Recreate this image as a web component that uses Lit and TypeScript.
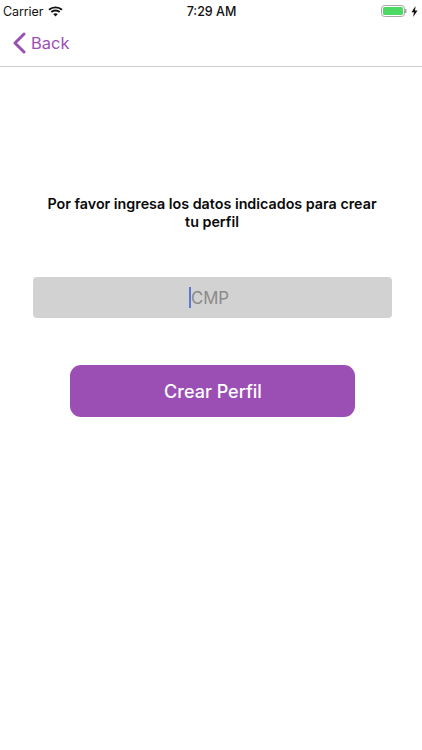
import { LitElement, html, css } from "lit";
import { customElement } from "lit/decorators.js";

@customElement("app-root")
export class AppRoot extends LitElement {
  static styles = css`
    :host {
      display: block;
      width: 422px;
      height: 750px;
      background: #fff;
      font-family: Inter, "Liberation Sans", sans-serif;
      overflow: hidden;
    }
    .status {
      height: 22px;
      display: grid;
      grid-template-columns: 1fr auto 1fr;
      align-items: center;
      padding: 0 4px 0 3px;
      color: #111;
    }
    .left { display: flex; align-items: center; gap: 5px; }
    .carrier { font-size: 12.5px; letter-spacing: -0.1px; }
    .time { font-size: 12.5px; font-weight: 500; padding-left: 2px; }
    .right { display: flex; justify-content: flex-end; align-items: center; gap: 4px; }
    .nav {
      height: 45px;
      box-sizing: border-box;
      border-bottom: 1px solid #cfcfcf;
      display: flex;
      align-items: center;
      padding: 0 0 2px 13px;
      gap: 5px;
      color: #9b4fb5;
      font-size: 16.5px;
    }
    .main {
      display: flex;
      flex-direction: column;
      align-items: center;
      padding: 128px 0 0 2px;
    }
    .title {
      width: 340px;
      margin: 0;
      text-align: center;
      font-size: 14.3px;
      font-weight: 600;
      line-height: 18px;
      color: #0a0a0a;
    }
    .field {
      margin-top: 46px;
      width: 359px;
      height: 41px;
      box-sizing: border-box;
      padding-right: 6px;
      border-radius: 4px;
      background: #d2d2d2;
      display: flex;
      align-items: center;
      justify-content: center;
      font-size: 16.8px;
      color: #8a8a8a;
    }
    .caret {
      width: 2px;
      height: 21px;
      background: #5b78d8;
    }
    .btn {
      margin-top: 47px;
      width: 285px;
      height: 52px;
      padding: 0 0 0 2px;
      border: 0;
      border-radius: 11px;
      background: #9b4fb5;
      color: #fff;
      font: 500 18px Inter, "Liberation Sans", sans-serif;
    }
  `;

  render() {
    return html`
      <div class="status">
        <div class="left">
          <span class="carrier">Carrier</span>
          <svg width="15" height="11" viewBox="0 0 15 11" fill="none" stroke="#111" stroke-width="1.9">
            <path d="M1 3.8C4.6.5 10.4.5 14 3.8" />
            <path d="M3.3 6C5.6 4 9.4 4 11.7 6" />
            <path d="M7.5 10.5 5.2 8.1c1.3-1.1 3.3-1.1 4.6 0Z" fill="#111" stroke="none" />
          </svg>
        </div>
        <span class="time">7:29 AM</span>
        <div class="right">
          <svg width="26" height="12" viewBox="0 0 26 12">
            <rect x="0.5" y="0.5" width="23" height="11" rx="3" fill="none" stroke="#a8a8a8" />
            <rect x="2" y="2" width="20" height="8" rx="1.5" fill="#4cd964" />
            <rect x="24" y="4" width="1.5" height="4" fill="#a8a8a8" />
          </svg>
          <svg width="7" height="11" viewBox="0 0 7 11"><path d="M4.5 0 0.5 6.2h2.4L2.2 11l4.3-6.4H4Z" fill="#111" /></svg>
        </div>
      </div>
      <div class="nav">
        <svg width="13" height="22" viewBox="0 0 13 22" fill="none" stroke="#9b4fb5" stroke-width="3" stroke-linecap="round" stroke-linejoin="round">
          <path d="M11 2 2 11l9 9" />
        </svg>
        <span>Back</span>
      </div>
      <div class="main">
        <p class="title">Por favor ingresa los datos indicados para crear tu perfil</p>
        <div class="field"><span class="caret"></span><span>CMP</span></div>
        <button class="btn">Crear Perfil</button>
      </div>
    `;
  }
}
